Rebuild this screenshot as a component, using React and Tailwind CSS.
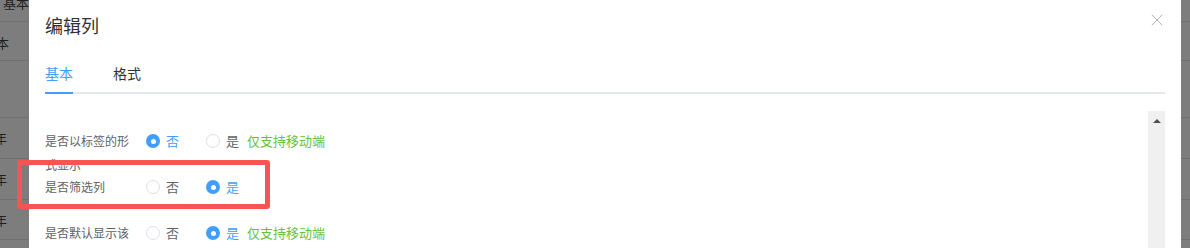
import { X } from "lucide-react";

const FONT = { fontFamily: '"Noto Sans CJK SC", "Noto Sans", sans-serif' };

// rows of the table that sits behind the dimmed overlay
const bgRows = [
  { h: "h-[22px]", text: "基本", cls: "ml-[3px] -mt-[7px]" },
  { h: "h-[39px]", text: "基本", cls: "-ml-[17px] mt-[11px]" },
  { h: "h-[57px]", text: "", cls: "" },
  { h: "h-[41px]", text: "年", cls: "-ml-[6px] mt-[10px]" },
  { h: "h-[41px]", text: "年", cls: "-ml-[6px] mt-[10px]" },
  { h: "h-[40px]", text: "年", cls: "-ml-[6px] mt-[10px]" },
];

const Radio = ({ checked, label }) => (
  <span className="flex items-center">
    {checked ? (
      <span className="w-[14px] h-[14px] rounded-full bg-[#409eff] flex items-center justify-center">
        <span className="w-[5px] h-[5px] rounded-full bg-white" />
      </span>
    ) : (
      <span className="w-[14px] h-[14px] rounded-full border border-[#dcdfe6] bg-white" />
    )}
    <span
      className={`ml-[6px] text-[13px] ${checked ? "text-[#409eff]" : "text-[#606266]"}`}
    >
      {label}
    </span>
  </span>
);

const Row = ({ label, value, hint }) => (
  <div className="flex items-start h-[46px]">
    <div className="w-[101px] pr-[12px] text-[12px] leading-[24px] text-[#606266] shrink-0">
      {label}
    </div>
    <div className="flex items-center h-[24px]">
      <div className="w-[60px]">
        <Radio checked={value === "no"} label="否" />
      </div>
      <Radio checked={value === "yes"} label="是" />
      {hint && (
        <span className="ml-[8px] text-[13px] text-[#67c23a]">仅支持移动端</span>
      )}
    </div>
  </div>
);

export default function App() {
  return (
    <div className="relative w-[1190px] h-[248px] overflow-hidden bg-[#7d7d7d]" style={FONT}>
      {/* background table */}
      <div className="flex flex-col">
        {bgRows.map((r, i) => (
          <div key={i} className={`${r.h} border-b border-[#707070] flex`}>
            <span className={`text-[13px] leading-[20px] text-[#1f1f1f] ${r.cls}`}>
              {r.text}
            </span>
          </div>
        ))}
      </div>

      {/* dialog */}
      <div className="absolute left-[29px] top-[-8px] w-[1152px] h-[300px] bg-white rounded-[3px]">
        <div className="flex items-start justify-between pl-[16px] pr-[14px] pt-[21px]">
          <h2 className="text-[18px] leading-[24px] text-[#303133]">编辑列</h2>
          <button className="-mt-[3px] text-[#a0a3a8]">
            <X size={20} strokeWidth={1} />
          </button>
        </div>

        <div className="pl-[16px] pr-[16px] mt-[17px]">
          <div className="flex h-[40px] border-b-2 border-[#e4e7ed]">
            <div className="relative flex items-center text-[14px] text-[#409eff]">
              基本
              <span className="absolute left-0 right-0 -bottom-[2px] h-[2px] bg-[#409eff]" />
            </div>
            <div className="flex items-center ml-[40px] text-[14px] text-[#303133]">格式</div>
          </div>

          <div className="flex mt-[17px]">
            <div className="flex-1 pt-[18px]">
              <Row label="是否以标签的形式显示" value="no" hint />
              <Row label="是否筛选列" value="yes" />
              <Row label="是否默认显示该列" value="yes" hint />
            </div>
            <div className="w-[17px] h-[140px] bg-[#f0f0f0] flex justify-center pt-[8px]">
              <svg width="8" height="4" viewBox="0 0 8 4">
                <path d="M0 4 L4 0 L8 4 Z" fill="#505050" />
              </svg>
            </div>
          </div>
        </div>
      </div>

      {/* annotation box */}
      <div className="absolute left-[17px] top-[160px] w-[253px] h-[49px] border-[5px] border-[#fb5252] rounded-[3px]" />
    </div>
  );
}
